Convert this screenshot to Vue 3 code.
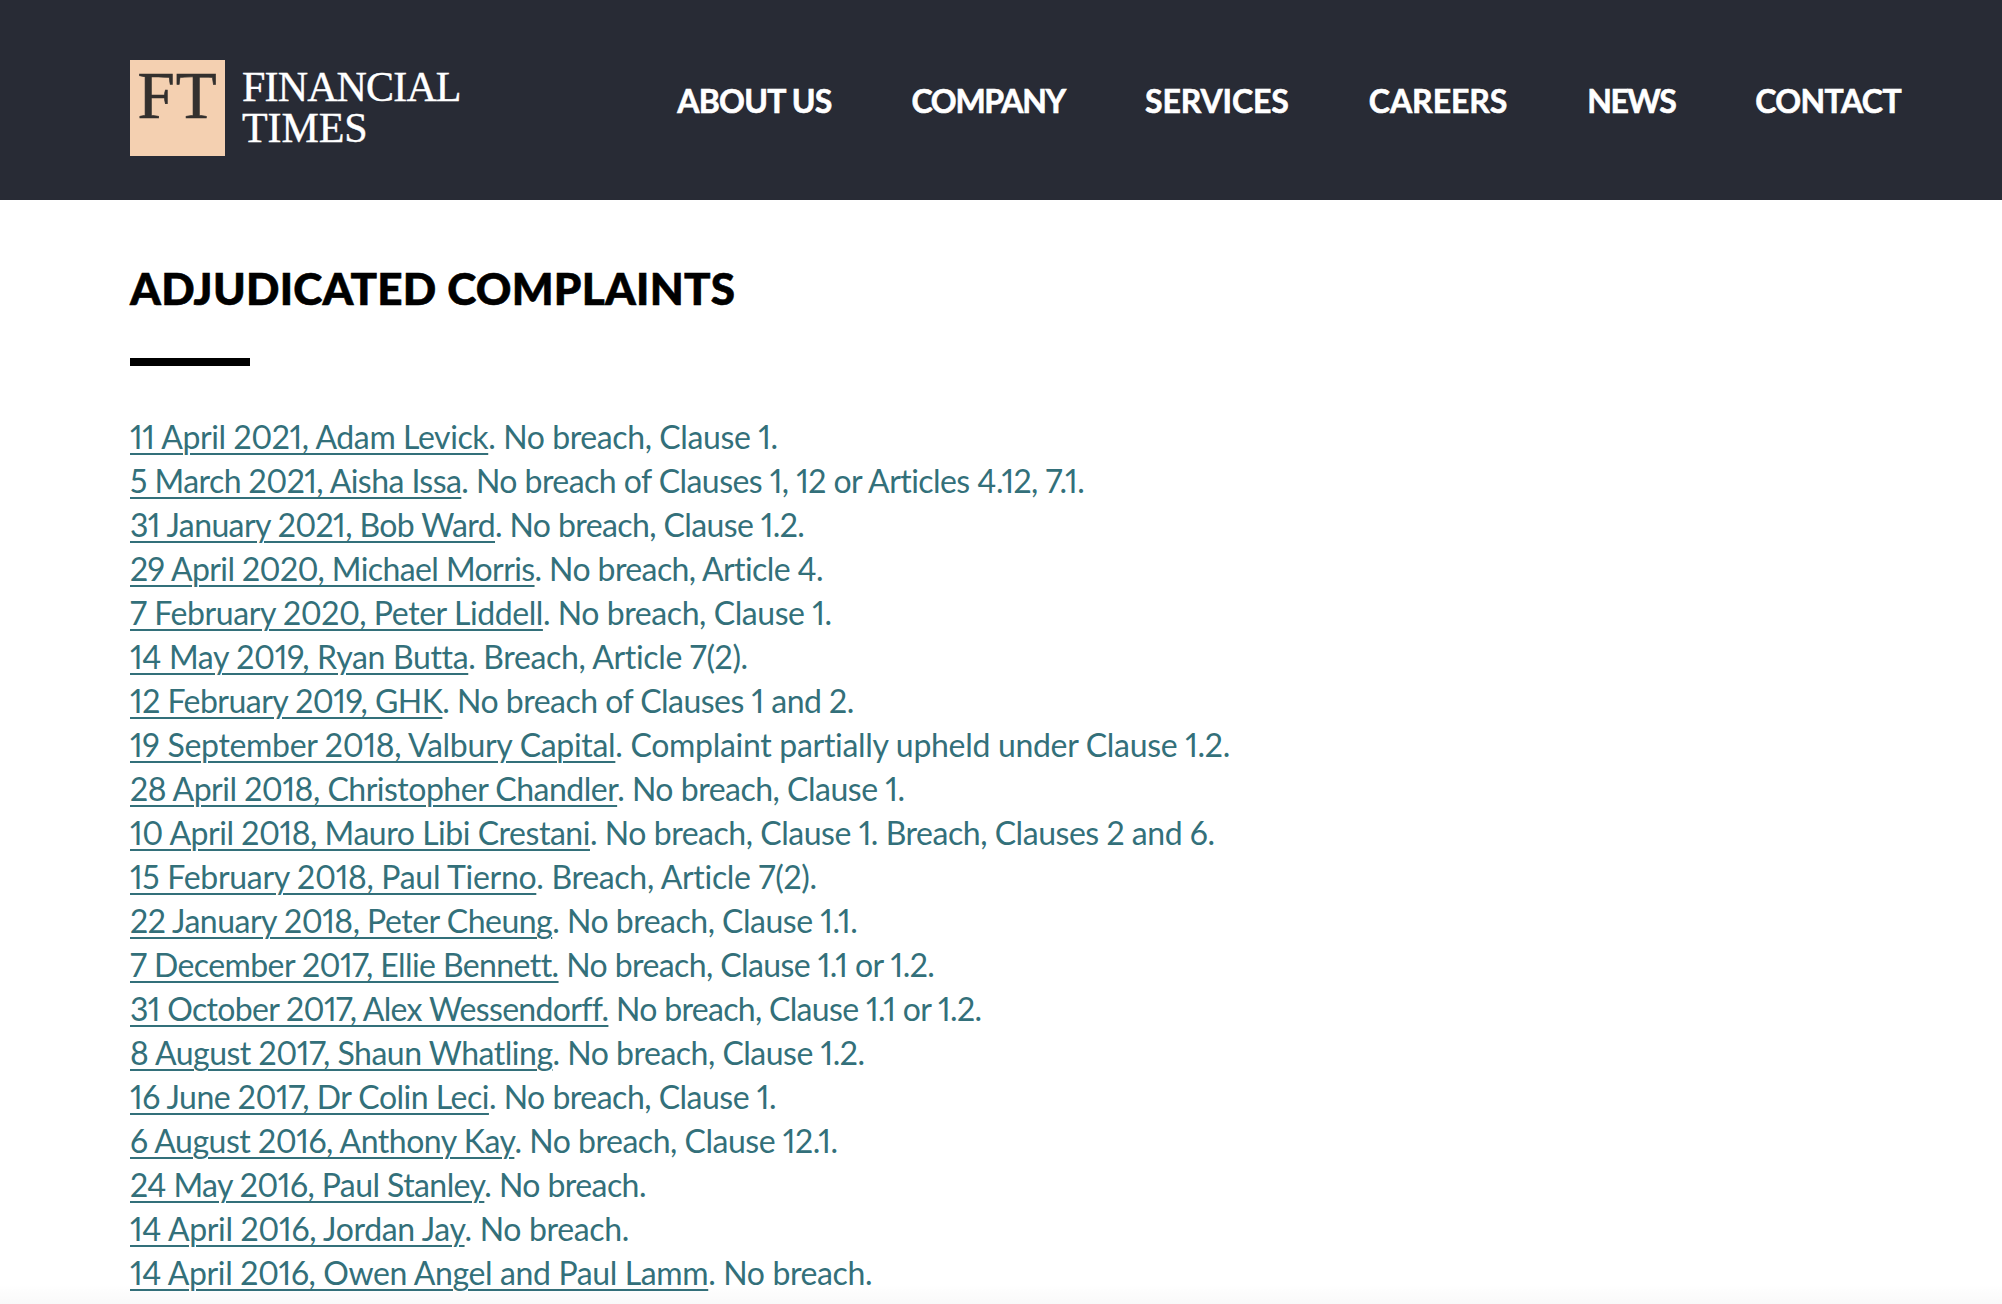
<script setup>
// Each entry carries a small tracking correction: the fallback face's glyph widths differ from the original's.
const nav = [
  { label: 'ABOUT US', ls: -0.75 },
  { label: 'COMPANY', ls: -1.3 },
  { label: 'SERVICES', ls: -0.1 },
  { label: 'CAREERS', ls: -0.05 },
  { label: 'NEWS', ls: -1.55 },
  { label: 'CONTACT', ls: -0.6 },
]
const base = [
  ['11 April 2021, Adam Levick', '. No breach, Clause 1.', 0],
  ['5 March 2021, Aisha Issa', '. No breach of Clauses 1, 12 or Articles 4.12, 7.1.', -9],
  ['31 January 2021, Bob Ward', '. No breach, Clause 1.2.', -8],
  ['29 April 2020, Michael Morris', '. No breach, Article 4.', -8],
  ['7 February 2020, Peter Liddell', '. No breach, Clause 1.', -1],
  ['14 May 2019, Ryan Butta', '. Breach, Article 7(2).', 2],
  ['12 February 2019, GHK', '. No breach of Clauses 1 and 2.', -5],
  ['19 September 2018, Valbury Capital', '. Complaint partially upheld under Clause 1.2.', 6],
  ['28 April 2018, Christopher Chandler', '. No breach, Clause 1.', -4],
  ['10 April 2018, Mauro Libi Crestani', '. No breach, Clause 1. Breach, Clauses 2 and 6.', -4],
  ['15 February 2018, Paul Tierno', '. Breach, Article 7(2).', 4],
  ['22 January 2018, Peter Cheung', '. No breach, Clause 1.1.', -4],
  ['7 December 2017, Ellie Bennett.', ' No breach, Clause 1.1 or 1.2.', -9],
  ['31 October 2017, Alex Wessendorff.', ' No breach, Clause 1.1 or 1.2.', -14],
  ['8 August 2017, Shaun Whatling', '. No breach, Clause 1.2.', -4],
  ['16 June 2017, Dr Colin Leci', '. No breach, Clause 1.', -4],
  ['6 August 2016, Anthony Kay', '. No breach, Clause 12.1.', -3],
  ['24 May 2016, Paul Stanley', '. No breach.', -5],
  ['14 April 2016, Jordan Jay', '. No breach.', 2],
  ['14 April 2016, Owen Angel and Paul Lamm', '. No breach.', 1],
]
const rows = base.map(([link, rest, d]) => ({
  link,
  rest,
  ls: -0.4 + (d * 1.277) / (link.length + rest.length),
}))
</script>

<template>
  <div class="page">
    <header class="top">
      <a class="logo" href="#">
        <span class="mark">FT</span>
        <span class="word"><span class="line">FINANCIAL</span><span class="line times">TIMES</span></span>
      </a>
      <nav class="nav">
        <a v-for="n in nav" :key="n.label" href="#" :style="{ letterSpacing: n.ls + 'px' }">{{ n.label }}</a>
      </nav>
    </header>
    <main class="content">
      <h1>ADJUDICATED COMPLAINTS</h1>
      <div class="rule"></div>
      <ul class="list">
        <li v-for="r in rows" :key="r.link" :style="{ letterSpacing: r.ls.toFixed(3) + 'px' }"><a href="#">{{ r.link }}</a>{{ r.rest }}</li>
      </ul>
    </main>
    <div class="fade"></div>
  </div>
</template>

<style>
html, body { margin: 0; background: #fff; overflow: hidden; }
</style>

<style scoped>
.page { position: relative; height: 1304px; overflow: hidden; font-family: Lato, "Noto Sans", sans-serif; }
.top { height: 200px; background: #282b35; box-sizing: border-box; padding: 0 101px 0 130px; display: flex; align-items: center; justify-content: space-between; }
.logo { display: flex; align-items: flex-start; height: 96px; text-decoration: none; margin-top: 16px; }
.mark { width: 95px; height: 96px; background: #f4d0b1; color: #33302e; font-family: "Liberation Serif", serif; font-size: 67px; line-height: 70px; text-align: center; letter-spacing: 1px; -webkit-text-stroke: 0.6px #33302e; }
.word { display: flex; flex-direction: column; margin-left: 17px; color: #fff; font-family: "Liberation Serif", serif; font-size: 42px; line-height: 41px; margin-top: 7px; letter-spacing: -0.85px; -webkit-text-stroke: 0.4px #fff; }
.times { letter-spacing: -0.1px; }
.nav { display: flex; gap: 80px; margin-top: 1px; }
.nav a { color: #fff; font-size: 32px; font-weight: 700; text-decoration: none; line-height: 40px; -webkit-text-stroke: 0.6px #fff; }
.content { padding: 60px 130px 0; }
h1 { margin: 0; color: #000; font-size: 44px; font-weight: 900; line-height: 56px; letter-spacing: 0.25px; -webkit-text-stroke: 0.6px #000; }
.rule { width: 120px; height: 8px; background: #000; margin-top: 42px; }
.list { list-style: none; margin: 49px 0 0; padding: 0; color: #33707a; font-size: 32px; line-height: 44px; font-variant-numeric: proportional-nums; }
.list a { color: inherit; text-decoration: underline; text-decoration-thickness: 2px; text-underline-offset: 4px; }
.fade { position: absolute; left: 0; right: 0; bottom: 0; height: 20px; background: linear-gradient(to bottom, rgba(0,0,0,0), rgba(0,0,0,0.025)); }
</style>
